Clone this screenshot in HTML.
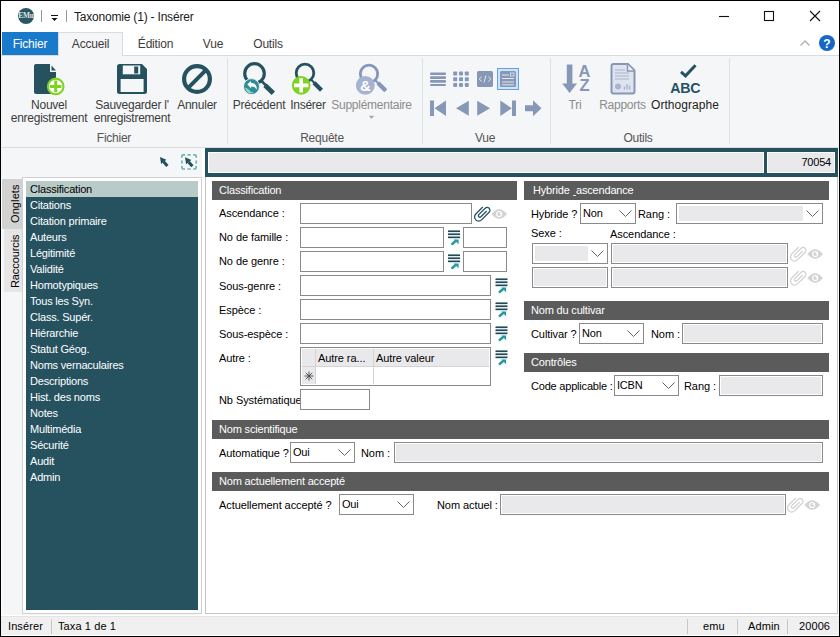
<!DOCTYPE html>
<html><head><meta charset="utf-8"><title>Taxonomie (1) - Insérer</title>
<style>
*{box-sizing:border-box;margin:0;padding:0}
html,body{width:840px;height:637px;overflow:hidden;background:#fff}
body{font-family:"Liberation Sans",sans-serif;font-size:11px;color:#000;position:relative}
.a{position:absolute}
#win{position:absolute;left:0;top:0;width:840px;height:637px;border:1px solid #000;background:#fff}
/* ribbon */
.rt{position:absolute;font-size:12px;color:#3c3c3c;white-space:nowrap;letter-spacing:-0.25px;text-align:center;line-height:13px}
.rt.g{color:#8c8c8c}
.tab{position:absolute;top:32px;height:23px;font-size:12px;line-height:25px;text-align:center;color:#3c3c3c;letter-spacing:-0.2px}
.sep{position:absolute;top:58px;width:1px;height:86px;background:#dfe0e2}
/* form */
.l{position:absolute;white-space:nowrap;font-size:11px;line-height:13px;letter-spacing:-0.08px;color:#000}
.h{position:absolute;height:19px;background:#5b5b5b;color:#fff;font-size:11px;line-height:19px;padding-left:7px;letter-spacing:-0.18px;white-space:nowrap}
.i{position:absolute;height:21px;border:1px solid #8a8a8a;background:#fff}
.d{position:absolute;height:21px;border:1px solid #8a8a8a;background:#e9e9eb;box-shadow:inset 0 0 0 1px #fff}
.c{position:absolute;height:21px;border:1px solid #8a8a8a;background:#fff;font-size:11px;line-height:19px;padding-left:2px;letter-spacing:-0.2px}
.c svg{position:absolute;right:3px;top:6px}
.c.x::before{content:"";position:absolute;left:2px;top:2px;bottom:2px;right:19px;background:#e9e9eb}
.li{position:absolute;left:26px;width:172px;height:16px;line-height:16px;padding-left:4px;color:#fff;font-size:11px;letter-spacing:-0.2px;white-space:nowrap}
.st{position:absolute;top:620px;font-size:11px;line-height:13px;letter-spacing:0.1px;white-space:nowrap}
.ss{position:absolute;top:619px;width:1px;height:15px;background:#c8c8c8}
</style></head><body>
<div id="win"></div>

<!-- TITLE BAR -->
<svg class="a" style="left:17px;top:7px" width="18" height="18" viewBox="0 0 18 18"><circle cx="9" cy="9" r="8" fill="#2b5663"/><text x="9" y="11.3" font-family="Liberation Serif" font-size="7.4" font-weight="bold" fill="#dfe9ea" text-anchor="middle" letter-spacing="-0.2">EMu</text></svg>
<div class="a" style="left:41px;top:10px;width:1px;height:12px;background:#9a9a9a"></div>
<svg class="a" style="left:50px;top:14px" width="9" height="8" viewBox="0 0 9 8"><rect x="1" y="1" width="7" height="1" fill="#111"/><path d="M1.5 4h6l-3 3z" fill="#111"/></svg>
<div class="a" style="left:66px;top:10px;width:1px;height:12px;background:#9a9a9a"></div>
<div class="a" style="left:74px;top:10px;font-size:12px;line-height:14px;letter-spacing:-0.2px;color:#1a1a1a;white-space:nowrap">Taxonomie (1) - Insérer</div>
<svg class="a" style="left:715px;top:8px" width="110" height="18" viewBox="0 0 110 18" fill="none" stroke="#111" stroke-width="1.1"><path d="M4 8.5h10"/><rect x="49.5" y="3.5" width="9" height="9"/><path d="M95 3l10 10M105 3l-10 10"/></svg>

<!-- TABS -->
<div class="a" style="left:1px;top:55px;width:838px;height:1px;background:#dadbdc"></div>
<div class="tab" style="left:2px;width:56px;background:#1979ca;color:#fff">Fichier</div>
<div class="tab" style="left:58px;width:65px;height:24px;line-height:23px;background:#f5f6f7;border:1px solid #dadbdc;border-bottom:none">Accueil</div>
<div class="tab" style="left:123px;width:65px">Édition</div>
<div class="tab" style="left:188px;width:50px">Vue</div>
<div class="tab" style="left:238px;width:60px">Outils</div>
<svg class="a" style="left:799px;top:39px" width="12" height="8" viewBox="0 0 12 8" fill="none" stroke="#b0b0b0" stroke-width="1.3"><path d="M1.5 6.5L6 2l4.500 4.500"/></svg>
<svg class="a" style="left:818px;top:34px" width="18" height="18" viewBox="0 0 18 18"><circle cx="9" cy="9" r="8" fill="#1767c4"/><text x="9" y="13.500" font-family="Liberation Sans" font-size="12" font-weight="bold" fill="#fff" text-anchor="middle">?</text></svg>

<!-- RIBBON BODY -->
<div class="a" style="left:1px;top:56px;width:838px;height:92px;background:#f5f6f7;border-bottom:1px solid #dadbdc"></div>
<div class="sep" style="left:227px"></div><div class="sep" style="left:422px"></div><div class="sep" style="left:550px"></div><div class="sep" style="left:729px"></div>
<svg class="a" style="left:0;top:56px" width="840" height="92" viewBox="0 56 840 92">
<!-- new record -->
<path d="M36 64H50V72H56V92a2 2 0 0 1-2 2H36a2 2 0 0 1-2-2V66a2 2 0 0 1 2-2z" fill="#26525f"/>
<path d="M51.500 65.500L56 70.500H51.500z" fill="#26525f"/>
<circle cx="55.700" cy="86.400" r="7.800" fill="#fff" stroke="#7ed321" stroke-width="2.100"/>
<path d="M55.700 80.600v11.600M49.900 86.400h11.600" stroke="#7ed321" stroke-width="3" fill="none"/>
<!-- save -->
<path d="M119.500 64H142L147 69V91.500a2.500 2.500 0 0 1-2.500 2.500H119.500a2.500 2.500 0 0 1-2.500-2.500V66.500a2.500 2.500 0 0 1 2.500-2.500z" fill="#26525f"/>
<rect x="122.800" y="65.500" width="17.400" height="8.800" fill="#f5f6f7"/>
<rect x="134.200" y="66.500" width="4" height="7" fill="#26525f"/>
<rect x="120.600" y="79" width="23" height="13" fill="#f5f6f7"/>
<!-- cancel -->
<circle cx="197" cy="79" r="12.900" fill="none" stroke="#26525f" stroke-width="4.200"/>
<path d="M206.300 69.700L187.700 88.300" stroke="#26525f" stroke-width="4" fill="none"/>
<!-- precedent -->
<circle cx="254.500" cy="73.500" r="9.800" fill="none" stroke="#26525f" stroke-width="3.200"/>
<path d="M261 80.500L266 85.500" stroke="#26525f" stroke-width="2.500" fill="none"/>
<path d="M265 85.200L273.300 93.300" stroke="#26525f" stroke-width="4.800" fill="none"/>
<circle cx="251.500" cy="86.600" r="8" fill="#2b8e95" stroke="#f5f6f7" stroke-width="1"/>
<path d="M247.300 84.300l3.800-3.300v2.100c4.200 0 6.300 2.600 5.400 6.800-0.600-2.300-2.300-3.500-5.400-3.400v2.100z" fill="#fff"/>
<path d="M245.200 87.500c1.500 0.800 3.500 1.400 4.600 3.200 0.700 1.200 2.300 1.800 4.400 1.200-1.300 1.400-3.600 1.800-5.500 1-1.900-0.900-3.300-2.800-3.500-5.400z" fill="#fff" opacity=".55"/>
<!-- inserer -->
<circle cx="305" cy="72.900" r="8.800" fill="none" stroke="#26525f" stroke-width="2.800"/>
<path d="M311 79.500L315 83.500" stroke="#26525f" stroke-width="2.200" fill="none"/>
<path d="M314 82.800L321.500 90.300" stroke="#26525f" stroke-width="4.200" fill="none"/>
<circle cx="301.200" cy="85.400" r="9.300" fill="#7ed321"/>
<path d="M301.200 78.200v14.400M294 85.400h14.400" stroke="#fff" stroke-width="3.600" fill="none"/>
<!-- supplementaire -->
<circle cx="369" cy="73.800" r="8.700" fill="none" stroke="#8496ba" stroke-width="2.800"/>
<path d="M375 80L379 84" stroke="#8496ba" stroke-width="2.200" fill="none"/>
<path d="M378 83L385.800 90.800" stroke="#8496ba" stroke-width="4.200" fill="none"/>
<circle cx="365.300" cy="85.400" r="9.400" fill="#a5b3d1"/>
<text x="365.300" y="91" font-family="Liberation Sans" font-weight="bold" font-size="15" fill="#fff" text-anchor="middle">&amp;</text>
<path d="M368.800 115.800h5.400l-2.700 3.200z" fill="#a8a8a8"/>
<!-- vue row1 -->
<g fill="#8797b6">
<rect x="430" y="72.500" width="16" height="2.600" rx="1"/><rect x="430" y="76.300" width="16" height="2.600" rx="1"/><rect x="430" y="80.100" width="16" height="2.600" rx="1"/><rect x="430" y="83.900" width="16" height="2.200" rx="1"/>
<g>
<rect x="453.200" y="71.500" width="4" height="4" rx=".8"/><rect x="459" y="71.500" width="4" height="4" rx=".8"/><rect x="464.800" y="71.500" width="4" height="4" rx=".8"/>
<rect x="453.200" y="77.200" width="4" height="4" rx=".8"/><rect x="459" y="77.200" width="4" height="4" rx=".8"/><rect x="464.800" y="77.200" width="4" height="4" rx=".8"/>
<rect x="453.200" y="82.900" width="4" height="4" rx=".8"/><rect x="459" y="82.900" width="4" height="4" rx=".8"/><rect x="464.800" y="82.900" width="4" height="4" rx=".8"/>
</g>
<rect x="477" y="71" width="16" height="16" rx="1.500"/>
</g>
<path d="M481.500 76.500l-2.200 2.500 2.200 2.500M488.500 76.500l2.200 2.500-2.200 2.500M486 75.500l-2 7" stroke="#dfe4ef" stroke-width="1" fill="none"/>
<rect x="497.500" y="68.500" width="21" height="21" fill="#cde4f7" stroke="#62a2e4"/>
<rect x="500" y="71" width="16" height="16" rx="1.500" fill="#8797b6"/>
<path d="M502 75h7M502 78.500h12M502 82h12M502 84.800h12" stroke="#e3e8f2" stroke-width="1" fill="none"/>
<rect x="510.500" y="73" width="3.500" height="3" fill="none" stroke="#e3e8f2" stroke-width=".8"/>
<!-- vue row2 -->
<g fill="#8797b6">
<rect x="430" y="100.500" width="4" height="15.500"/><path d="M446 100.500v15.500l-11.500-7.750z"/>
<path d="M468.800 100.800v15l-12.800-7.500z"/>
<path d="M477.200 100.800v15l12.800-7.500z"/>
<path d="M500.300 100.500v15.500l11.500-7.750z"/><rect x="512" y="100.500" width="4" height="15.500"/>
<path d="M525 105.300h8v-5l8.500 8-8.500 8v-5h-8z"/>
</g>
<!-- tri -->
<g fill="#8797b6">
<path d="M566.800 64.500h5.600v19h4.600l-7.400 9.500-7.400-9.500h4.600z"/>
</g>
<text x="584.500" y="77" font-family="Liberation Sans" font-weight="bold" font-size="16.500" fill="#8797b6" text-anchor="middle">A</text>
<text x="584.500" y="91.300" font-family="Liberation Sans" font-weight="bold" font-size="16.500" fill="#8797b6" text-anchor="middle">Z</text>
<!-- rapports -->
<path d="M613.500 64h14.500l6.500 6.500V91.500a2 2 0 0 1-2 2H613.500a2 2 0 0 1-2-2V66a2 2 0 0 1 2-2z" fill="#dfe3ee" stroke="#8797b6" stroke-width="2"/>
<path d="M627.500 64.500v6.500h6.500" fill="#f5f6f7" stroke="#8797b6" stroke-width="1.600"/>
<path d="M615 70h10M615 73h14M615 76h14M615 79h14" stroke="#c3cbde" stroke-width="1.800" fill="none"/>
<circle cx="618" cy="86.500" r="3" fill="#a9b4d0"/>
<path d="M624.500 89.500v-3M627 89.500v-5.500M629.500 89.500v-4" stroke="#a9b4d0" stroke-width="1.400" fill="none"/>
<!-- orthographe -->
<path d="M681 71.800l4.500 4 10-10.500" stroke="#26525f" stroke-width="3" fill="none"/>
<text transform="translate(685.300 93) scale(0.915 1)" x="0" y="0" font-family="Liberation Sans" font-weight="bold" font-size="15.500" fill="#26525f" text-anchor="middle" letter-spacing="-0.3">ABC</text>
</svg>

<div class="rt" style="left:9px;top:99px;width:80px">Nouvel<br>enregistrement</div>
<div class="rt" style="left:92px;top:99px;width:80px">Sauvegarder l'<br>enregistrement</div>
<div class="rt" style="left:171px;top:99px;width:52px">Annuler</div>
<div class="rt" style="left:229px;top:99px;width:60px">Précédent</div>
<div class="rt" style="left:283px;top:99px;width:50px">Insérer</div>
<div class="rt g" style="left:326px;top:99px;width:91px">Supplémentaire</div>
<div class="rt g" style="left:555px;top:99px;width:40px">Tri</div>
<div class="rt g" style="left:592px;top:99px;width:61px">Rapports</div>
<div class="rt" style="left:645px;top:99px;width:80px;color:#1e1e1e;letter-spacing:0.05px">Orthographe</div>
<div class="rt" style="left:84px;top:132px;width:60px;color:#555">Fichier</div>
<div class="rt" style="left:292px;top:132px;width:60px;color:#555">Requête</div>
<div class="rt" style="left:455px;top:132px;width:60px;color:#555">Vue</div>
<div class="rt" style="left:608px;top:132px;width:60px;color:#555">Outils</div>

<!-- TOOLBAR STRIP -->
<div class="a" style="left:1px;top:148px;width:201px;height:30px;background:#f5f6f7"></div>
<svg class="a" style="left:155px;top:150px" width="48" height="24" viewBox="155 150 48 24">
<path d="M160 157L166.400 159.800L161.100 164Z" fill="#26525f"/><path d="M163.600 161.700L167.400 166" stroke="#26525f" stroke-width="3.100" fill="none"/>
<g fill="none" stroke="#6db5b5" stroke-width="1.700">
<path d="M181.900 157.800V156.200a1.400 1.400 0 0 1 1.400-1.400H185"/>
<path d="M193.200 154.800H194.800a1.400 1.400 0 0 1 1.400 1.400V157.800"/>
<path d="M196.200 166V167.600a1.400 1.400 0 0 1-1.400 1.400H193.200"/>
<path d="M185 169H183.300a1.400 1.400 0 0 1-1.400-1.400V166"/>
<path d="M187.500 154.800h3.200M187.500 169h3.200M181.900 160.400v3.100M196.200 160.400v3.100"/>
</g>
<path d="M185 157.300L191.400 160.100L186.100 164.300Z" fill="#26525f"/><path d="M188.600 162L192.400 166.300" stroke="#26525f" stroke-width="3.100" fill="none"/>
</svg>
<div class="a" style="left:205px;top:148px;width:633px;height:29px;background:#26525f"></div>
<div class="a" style="left:208px;top:152px;width:556px;height:21px;background:#e9e9eb;border:1px solid #fff"></div>
<div class="a" style="left:767px;top:152px;width:68px;height:21px;background:#e9e9eb;border:1px solid #fff;text-align:right;padding-right:3px;line-height:19px;font-size:11px;letter-spacing:-0.2px">70054</div>

<!-- LEFT PANEL -->
<div class="a" style="left:2px;top:178px;width:200px;height:437px;background:#f5f6f7"></div>
<div class="a" style="left:2px;top:179px;width:21px;height:50px;background:#d2d2d2"></div>
<div class="a" style="left:4px;top:229px;width:19px;height:63px;background:#e6e6e6"></div>
<div class="a" style="left:22px;top:177px;width:180px;height:437px;background:#fff;border:1px solid #d0d0d0"></div>
<div class="a" style="left:26px;top:181px;width:172px;height:429px;background:#26525f"></div>
<div class="a" style="left:2px;top:179px;width:20px;height:50px"><div style="position:absolute;left:6.500px;top:43.500px;transform-origin:0 0;transform:rotate(-90deg);font-size:11px;line-height:13px;white-space:nowrap;letter-spacing:0.1px">Onglets</div></div>
<div class="a" style="left:4px;top:229px;width:18px;height:63px"><div style="position:absolute;left:5px;top:59px;transform-origin:0 0;transform:rotate(-90deg);font-size:11px;line-height:13px;white-space:nowrap;letter-spacing:-0.1px">Raccourcis</div></div>
<div class="li" style="top:181px;background:#b9cbc8;color:#000">Classification</div>
<div class="li" style="top:197px">Citations</div>
<div class="li" style="top:213px">Citation primaire</div>
<div class="li" style="top:229px">Auteurs</div>
<div class="li" style="top:245px">Légitimité</div>
<div class="li" style="top:261px">Validité</div>
<div class="li" style="top:277px">Homotypiques</div>
<div class="li" style="top:293px">Tous les Syn.</div>
<div class="li" style="top:309px">Class. Supér.</div>
<div class="li" style="top:325px">Hiérarchie</div>
<div class="li" style="top:341px">Statut Géog.</div>
<div class="li" style="top:357px">Noms vernaculaires</div>
<div class="li" style="top:373px">Descriptions</div>
<div class="li" style="top:389px">Hist. des noms</div>
<div class="li" style="top:405px">Notes</div>
<div class="li" style="top:421px">Multimédia</div>
<div class="li" style="top:437px">Sécurité</div>
<div class="li" style="top:453px">Audit</div>
<div class="li" style="top:469px">Admin</div>

<!-- MAIN PANEL -->
<div class="a" style="left:205px;top:177px;width:633px;height:437px;background:#fff;border:1px solid #c4c4c4;border-top:none"></div>

<div class="h" style="left:212px;top:181px;width:305px">Classification</div>
<div class="l" style="left:219px;top:207px">Ascendance :</div><div class="i" style="left:300px;top:203px;width:172px"></div>
<div class="l" style="left:219px;top:231px">No de famille :</div><div class="i" style="left:300px;top:227px;width:144px"></div><div class="i" style="left:463px;top:227px;width:44px"></div>
<div class="l" style="left:219px;top:255px">No de genre :</div><div class="i" style="left:300px;top:251px;width:144px"></div><div class="i" style="left:463px;top:251px;width:44px"></div>
<div class="l" style="left:219px;top:280px">Sous-genre :</div><div class="i" style="left:300px;top:275px;width:191px"></div>
<div class="l" style="left:219px;top:304px">Espèce :</div><div class="i" style="left:300px;top:299px;width:191px"></div>
<div class="l" style="left:219px;top:328px">Sous-espèce :</div><div class="i" style="left:300px;top:323px;width:191px"></div>
<div class="l" style="left:219px;top:352px">Autre :</div>
<div class="i" style="left:300px;top:347px;width:191px;height:39px"></div>
<div class="a" style="left:302px;top:349px;width:187px;height:18px;background:#e9e9eb"></div>
<div class="a" style="left:302px;top:367px;width:14px;height:17px;background:#e9e9eb"></div>
<div class="a" style="left:315px;top:349px;width:1px;height:35px;background:#d4d4d4"></div>
<div class="a" style="left:373px;top:349px;width:1px;height:35px;background:#d4d4d4"></div>
<div class="a" style="left:302px;top:366px;width:187px;height:1px;background:#d4d4d4"></div>
<div class="l" style="left:318px;top:352px">Autre ra...</div><div class="l" style="left:376px;top:352px">Autre valeur</div>
<svg class="a" style="left:304px;top:371px" width="10" height="10" viewBox="0 0 10 10" stroke="#444" stroke-width="0.9"><path d="M5 0.500v9M0.500 5h9M1.800 1.800l6.400 6.400M8.200 1.800l-6.400 6.400"/></svg>
<div class="l" style="left:219px;top:394px">Nb Systématique</div><div class="i" style="left:300px;top:389px;width:70px"></div>

<div class="h" style="left:524px;top:181px;width:305px;padding-left:9px">Hybride <span style="display:inline-block;width:3.500px;overflow:hidden;vertical-align:bottom;height:19px">_</span>ascendance</div>
<div class="l" style="left:531px;top:208px">Hybride ?</div><div class="c" style="left:580px;top:203px;width:56px">Non<svg width="13" height="8" viewBox="0 0 13 8" fill="none" stroke="#666" stroke-width="1"><path d="M0.500 0.500l6 6 6-6"/></svg></div>
<div class="l" style="left:638px;top:208px">Rang :</div><div class="c x" style="left:676px;top:203px;width:147px"><svg width="13" height="8" viewBox="0 0 13 8" fill="none" stroke="#666" stroke-width="1"><path d="M0.500 0.500l6 6 6-6"/></svg></div>
<div class="l" style="left:531px;top:227px">Sexe :</div><div class="l" style="left:610px;top:228px">Ascendance :</div>
<div class="c x" style="left:532px;top:243px;width:76px"><svg width="13" height="8" viewBox="0 0 13 8" fill="none" stroke="#666" stroke-width="1"><path d="M0.500 0.500l6 6 6-6"/></svg></div>
<div class="d" style="left:611px;top:243px;width:177px"></div>
<div class="d" style="left:532px;top:267px;width:76px"></div>
<div class="d" style="left:611px;top:267px;width:177px"></div>

<div class="h" style="left:524px;top:301px;width:305px">Nom du cultivar</div>
<div class="l" style="left:531px;top:328px">Cultivar ?</div><div class="c" style="left:579px;top:323px;width:65px">Non<svg width="13" height="8" viewBox="0 0 13 8" fill="none" stroke="#666" stroke-width="1"><path d="M0.500 0.500l6 6 6-6"/></svg></div>
<div class="l" style="left:651px;top:328px">Nom :</div><div class="d" style="left:682px;top:323px;width:141px"></div>

<div class="h" style="left:524px;top:353px;width:305px">Contrôles</div>
<div class="l" style="left:531px;top:380px;letter-spacing:-0.2px">Code applicable :</div><div class="c" style="left:614px;top:375px;width:65px">ICBN<svg width="13" height="8" viewBox="0 0 13 8" fill="none" stroke="#666" stroke-width="1"><path d="M0.500 0.500l6 6 6-6"/></svg></div>
<div class="l" style="left:684px;top:380px">Rang :</div><div class="d" style="left:719px;top:375px;width:104px"></div>

<div class="h" style="left:212px;top:420px;width:617px">Nom scientifique</div>
<div class="l" style="left:219px;top:447px">Automatique ?</div><div class="c" style="left:290px;top:442px;width:65px">Oui<svg width="13" height="8" viewBox="0 0 13 8" fill="none" stroke="#666" stroke-width="1"><path d="M0.500 0.500l6 6 6-6"/></svg></div>
<div class="l" style="left:361px;top:447px">Nom :</div><div class="d" style="left:394px;top:442px;width:429px"></div>

<div class="h" style="left:212px;top:472px;width:617px">Nom actuellement accepté</div>
<div class="l" style="left:219px;top:499px">Actuellement accepté ?</div><div class="c" style="left:339px;top:494px;width:75px">Oui<svg width="13" height="8" viewBox="0 0 13 8" fill="none" stroke="#666" stroke-width="1"><path d="M0.500 0.500l6 6 6-6"/></svg></div>
<div class="l" style="left:437px;top:499px">Nom actuel :</div><div class="d" style="left:500px;top:494px;width:286px"></div>
<svg class="a" style="left:0;top:178px" width="840" height="437" viewBox="0 178 840 437"><path transform="translate(482 213.6) rotate(45) scale(-0.86 0.86) translate(-12.500 -12)" d="M16.500 6v11.500c0 2.210-1.790 4-4 4s-4-1.790-4-4V5c0-1.380 1.120-2.500 2.500-2.500s2.500 1.120 2.500 2.500v10.500c0 .550-.450 1-1 1s-1-.450-1-1V6H10v9.500c0 1.380 1.120 2.500 2.500 2.500s2.500-1.120 2.500-2.500V5c0-2.210-1.790-4-4-4S7 2.790 7 5v12.500c0 3.040 2.460 5.500 5.500 5.500s5.500-2.460 5.500-5.500V6h-1.500z" fill="#26525f"/><path d="M491.4 214Q499.2 204.4 507.0 214Q499.2 223.6 491.4 214z" fill="#d3d3d3"/><circle cx="499.2" cy="214" r="3.100" fill="#fff"/><circle cx="499.2" cy="214" r="1.900" fill="#d3d3d3"/><path d="M499.2 214h2.200v-2.200z" fill="#fff"/><rect x="448" y="230.4" width="12" height="1.700" fill="#1f4a57"/><rect x="448" y="233.4" width="12" height="1.700" fill="#1f4a57"/><rect x="448" y="236.5" width="12" height="1.700" fill="#1f4a57"/><path d="M452.2 244.0L455.6 241.0" stroke="#2a9999" stroke-width="2.400" fill="none" stroke-linecap="round"/><path d="M453.8 239.5h4.800v4.800z" fill="#2a9999"/><rect x="448" y="254.4" width="12" height="1.700" fill="#1f4a57"/><rect x="448" y="257.4" width="12" height="1.700" fill="#1f4a57"/><rect x="448" y="260.5" width="12" height="1.700" fill="#1f4a57"/><path d="M452.2 268.0L455.6 265.0" stroke="#2a9999" stroke-width="2.400" fill="none" stroke-linecap="round"/><path d="M453.8 263.5h4.800v4.800z" fill="#2a9999"/><rect x="495.5" y="278.4" width="12" height="1.700" fill="#1f4a57"/><rect x="495.5" y="281.4" width="12" height="1.700" fill="#1f4a57"/><rect x="495.5" y="284.5" width="12" height="1.700" fill="#1f4a57"/><path d="M499.7 292.0L503.1 289.0" stroke="#2a9999" stroke-width="2.400" fill="none" stroke-linecap="round"/><path d="M501.3 287.5h4.800v4.800z" fill="#2a9999"/><rect x="495.5" y="302.4" width="12" height="1.700" fill="#1f4a57"/><rect x="495.5" y="305.4" width="12" height="1.700" fill="#1f4a57"/><rect x="495.5" y="308.5" width="12" height="1.700" fill="#1f4a57"/><path d="M499.7 316.0L503.1 313.0" stroke="#2a9999" stroke-width="2.400" fill="none" stroke-linecap="round"/><path d="M501.3 311.5h4.800v4.800z" fill="#2a9999"/><rect x="495.5" y="326.4" width="12" height="1.700" fill="#1f4a57"/><rect x="495.5" y="329.4" width="12" height="1.700" fill="#1f4a57"/><rect x="495.5" y="332.5" width="12" height="1.700" fill="#1f4a57"/><path d="M499.7 340.0L503.1 337.0" stroke="#2a9999" stroke-width="2.400" fill="none" stroke-linecap="round"/><path d="M501.3 335.5h4.800v4.800z" fill="#2a9999"/><rect x="495.5" y="350.4" width="12" height="1.700" fill="#1f4a57"/><rect x="495.5" y="353.4" width="12" height="1.700" fill="#1f4a57"/><rect x="495.5" y="356.5" width="12" height="1.700" fill="#1f4a57"/><path d="M499.7 364.0L503.1 361.0" stroke="#2a9999" stroke-width="2.400" fill="none" stroke-linecap="round"/><path d="M501.3 359.5h4.800v4.800z" fill="#2a9999"/><path transform="translate(798 253.6) rotate(45) scale(-0.86 0.86) translate(-12.500 -12)" d="M16.500 6v11.500c0 2.210-1.790 4-4 4s-4-1.790-4-4V5c0-1.380 1.120-2.500 2.500-2.500s2.500 1.120 2.500 2.500v10.500c0 .550-.450 1-1 1s-1-.450-1-1V6H10v9.500c0 1.380 1.120 2.500 2.500 2.500s2.500-1.120 2.500-2.500V5c0-2.210-1.790-4-4-4S7 2.790 7 5v12.500c0 3.040 2.460 5.500 5.500 5.500s5.500-2.460 5.500-5.500V6h-1.500z" fill="#d3d3d3"/><path d="M807.4000000000001 254Q815.2 244.4 823.0 254Q815.2 263.6 807.4000000000001 254z" fill="#d3d3d3"/><circle cx="815.2" cy="254" r="3.100" fill="#fff"/><circle cx="815.2" cy="254" r="1.900" fill="#d3d3d3"/><path d="M815.2 254h2.200v-2.200z" fill="#fff"/><path transform="translate(798 277.6) rotate(45) scale(-0.86 0.86) translate(-12.500 -12)" d="M16.500 6v11.500c0 2.210-1.790 4-4 4s-4-1.790-4-4V5c0-1.380 1.120-2.500 2.500-2.500s2.500 1.120 2.500 2.500v10.500c0 .550-.450 1-1 1s-1-.450-1-1V6H10v9.500c0 1.380 1.120 2.500 2.500 2.500s2.500-1.120 2.500-2.500V5c0-2.210-1.790-4-4-4S7 2.790 7 5v12.500c0 3.040 2.460 5.500 5.500 5.500s5.500-2.460 5.500-5.500V6h-1.500z" fill="#d3d3d3"/><path d="M807.4000000000001 278Q815.2 268.4 823.0 278Q815.2 287.6 807.4000000000001 278z" fill="#d3d3d3"/><circle cx="815.2" cy="278" r="3.100" fill="#fff"/><circle cx="815.2" cy="278" r="1.900" fill="#d3d3d3"/><path d="M815.2 278h2.200v-2.200z" fill="#fff"/><path transform="translate(795 504.6) rotate(45) scale(-0.86 0.86) translate(-12.500 -12)" d="M16.500 6v11.500c0 2.210-1.790 4-4 4s-4-1.790-4-4V5c0-1.380 1.120-2.500 2.500-2.500s2.500 1.120 2.500 2.500v10.500c0 .550-.450 1-1 1s-1-.450-1-1V6H10v9.500c0 1.380 1.120 2.500 2.500 2.500s2.500-1.120 2.500-2.500V5c0-2.210-1.790-4-4-4S7 2.790 7 5v12.500c0 3.040 2.460 5.500 5.500 5.500s5.500-2.460 5.500-5.500V6h-1.500z" fill="#d3d3d3"/><path d="M804.4000000000001 505Q812.2 495.4 820.0 505Q812.2 514.6 804.4000000000001 505z" fill="#d3d3d3"/><circle cx="812.2" cy="505" r="3.100" fill="#fff"/><circle cx="812.2" cy="505" r="1.900" fill="#d3d3d3"/><path d="M812.2 505h2.200v-2.200z" fill="#fff"/></svg>

<!-- STATUS BAR -->
<div class="a" style="left:1px;top:616px;width:838px;height:19px;background:#f0f0f0;border-top:1px solid #e4e4e4"></div>
<div class="st" style="left:8px">Insérer</div><div class="ss" style="left:51px"></div>
<div class="st" style="left:58px">Taxa 1 de 1</div>
<div class="ss" style="left:687px"></div><div class="st" style="left:703px">emu</div>
<div class="ss" style="left:737px"></div><div class="st" style="left:748px">Admin</div>
<div class="ss" style="left:787px"></div><div class="st" style="left:799px">20006</div>
</body></html>
